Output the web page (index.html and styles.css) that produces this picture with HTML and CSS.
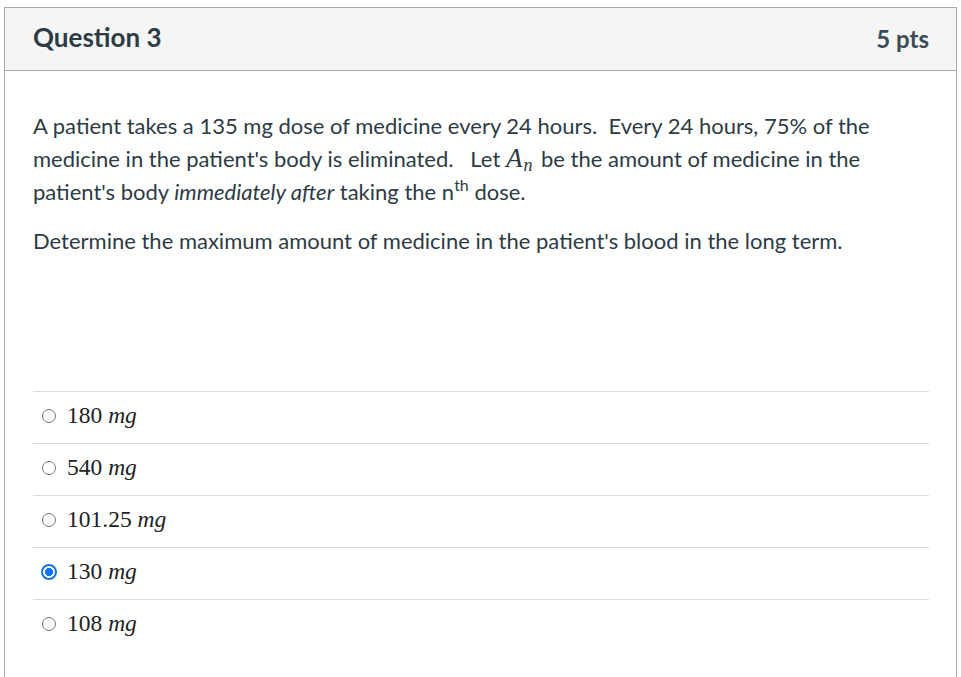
FILE: index.html
```html
<!DOCTYPE html>
<html>
<head>
<meta charset="utf-8">
<link rel="stylesheet" href="styles.css">
</head>
<body>
<div class="card">
  <div class="header">
    <span class="title">Question 3</span>
    <span class="pts">5 pts</span>
  </div>
  <div class="content">
    <p class="para">A patient takes a 135 mg dose of medicine every 24 hours.&nbsp; Every 24 hours, 75% of the medicine in the patient's body is eliminated.&nbsp;&nbsp; Let <span class="math">A<sub>n</sub></span> be the amount of medicine in the patient's body <em>immediately after</em> taking the n<sup>th</sup> dose.</p>
    <p class="para">Determine the maximum amount of medicine in the patient's blood in the long term.</p>
    <div class="answers">
      <div class="answer"><span class="radio"></span><span class="ans">180 <i>mg</i></span></div>
      <div class="answer"><span class="radio"></span><span class="ans">540 <i>mg</i></span></div>
      <div class="answer"><span class="radio"></span><span class="ans">101.25 <i>mg</i></span></div>
      <div class="answer"><span class="radio checked"></span><span class="ans">130 <i>mg</i></span></div>
      <div class="answer"><span class="radio"></span><span class="ans">108 <i>mg</i></span></div>
    </div>
  </div>
</div>
</body>
</html>
```
FILE: styles.css
```css
html, body {
  margin: 0;
  padding: 0;
  background: #fff;
}
body {
  padding: 7px 4px 0 4px;
  font-family: Lato, "Noto Sans", sans-serif;
  color: #2d3b45;
  overflow: hidden;
  height: 677px;
  box-sizing: border-box;
}
.card {
  border: 1px solid #a8a8a8;
  border-bottom: none;
  height: 700px;
}
.header {
  background: #f5f5f5;
  border-bottom: 1px solid #a8a8a8;
  height: 62px;
  display: flex;
  align-items: center;
  justify-content: space-between;
  padding: 0 27px 0 28px;
}
.title {
  font-size: 26px;
  font-weight: 700;
  margin-top: -4px;
}
.pts {
  font-size: 24px;
  font-weight: 700;
  color: #3d4b55;
  margin-top: -2px;
}
.content {
  padding: 38px 27px 0 28px;
}
.para {
  margin: 0 0 16px 0;
  font-size: 22px;
  line-height: 33px;
}
.para em {
  font-style: italic;
}
.math {
  font-family: "Liberation Serif", serif;
  font-style: italic;
  font-size: 27px;
  line-height: 0;
  padding-right: 3px;
}
.math sub {
  font-size: 18px;
  line-height: 0;
  vertical-align: baseline;
  position: relative;
  top: 4px;
  margin-left: 1px;
}
.para sup {
  font-size: 16px;
  line-height: 0;
  vertical-align: baseline;
  position: relative;
  top: -9px;
}
.answers {
  margin-top: 134px;
}
.answer {
  border-top: 1px solid #dcdcdc;
  height: 51px;
  display: flex;
  align-items: center;
  gap: 11px;
  padding-left: 9px;
}
.radio {
  width: 14px;
  height: 14px;
  border: 1px solid #767676;
  border-radius: 50%;
  box-sizing: border-box;
  background: #fff;
  flex: none;
  margin-top: -3px;
}
.radio.checked {
  border: 2px solid #1a73e8;
  background: radial-gradient(circle, #0b74ff 0 3.8px, #fff 4.3px);
  width: 16px;
  height: 16px;
  margin-left: -1px;
  margin-right: -1px;
}
.ans {
  font-family: "Liberation Serif", serif;
  font-size: 23.5px;
  color: #222;
  margin-top: -4px;
}
.ans i {
  font-style: italic;
}
```
